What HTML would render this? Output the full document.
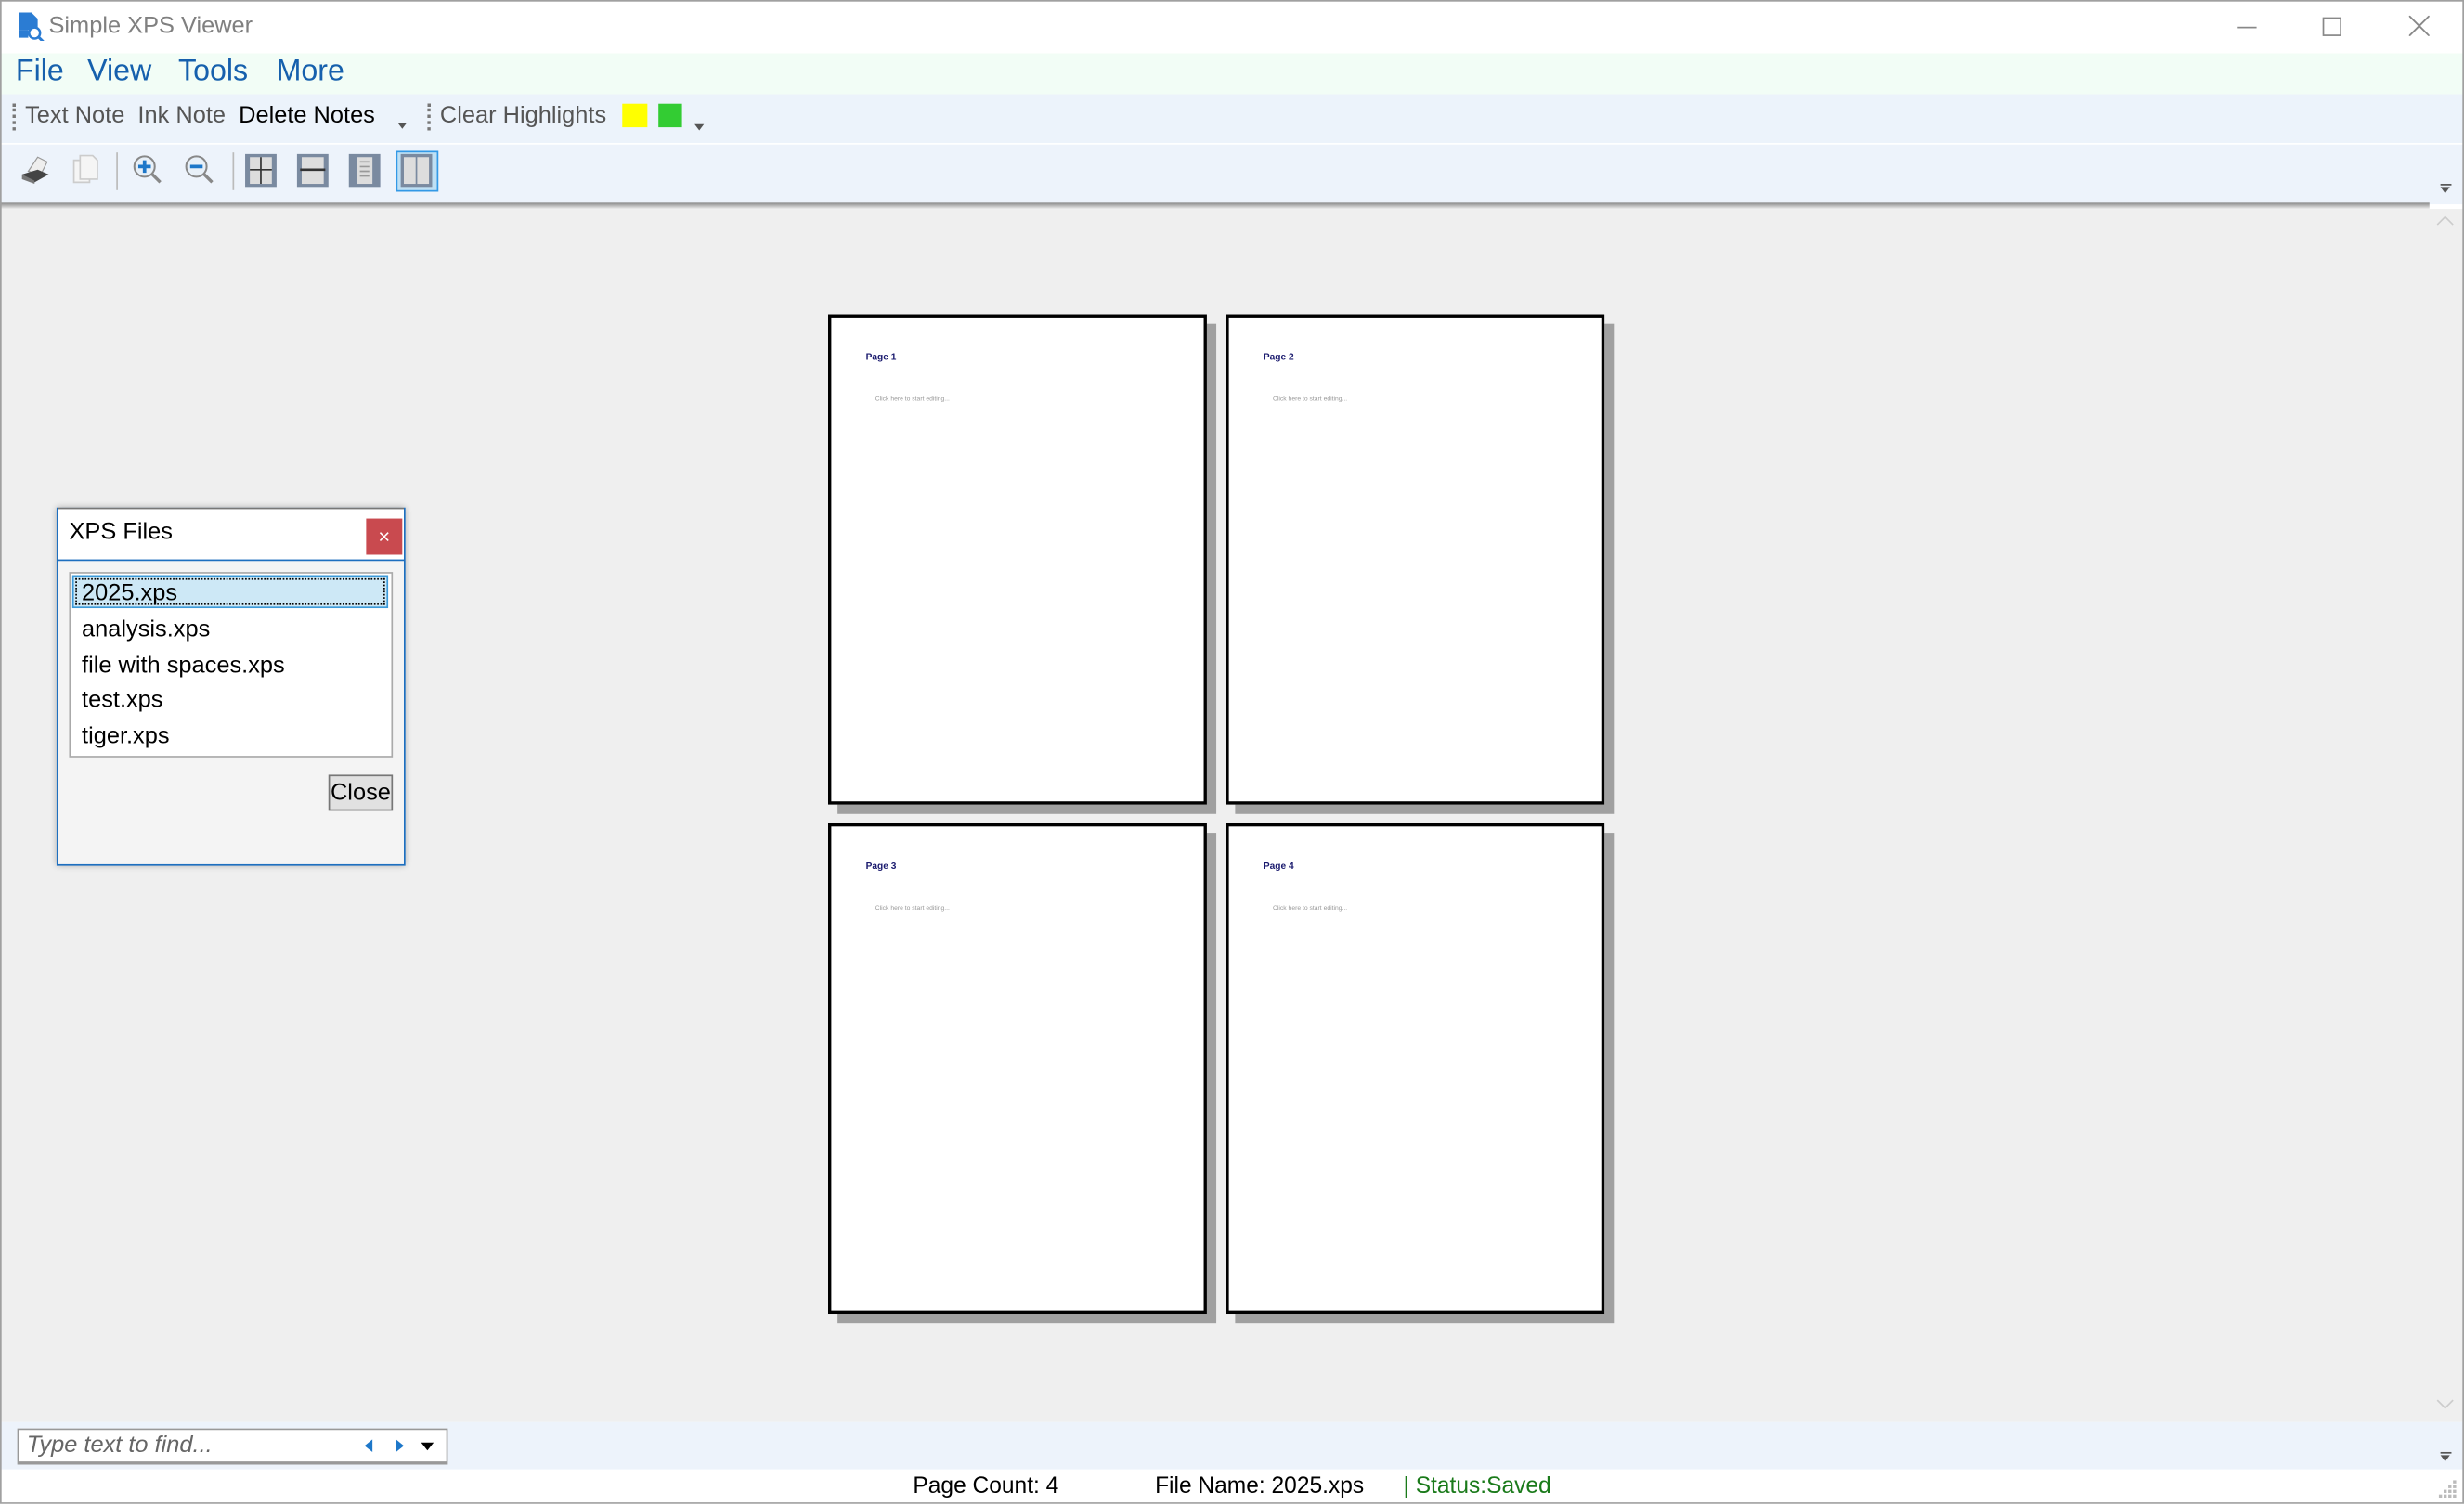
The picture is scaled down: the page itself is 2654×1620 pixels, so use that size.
<!DOCTYPE html>
<html><head><meta charset="utf-8"><style>
html,body{margin:0;padding:0;width:2654px;height:1620px;overflow:hidden;background:#fff}
#s{position:absolute;left:0;top:0;width:1568px;height:957px;transform:scale(1.692602);transform-origin:0 0;font-family:"Liberation Sans",sans-serif;background:#fff;overflow:hidden}
.a{position:absolute}
.pg{position:absolute;width:237px;height:308px;background:#fff;border:2px solid #000;box-shadow:6px 6px 0 #a0a0a0}
.pg b{position:absolute;left:22px;top:23px;font-size:6px;color:#1a1a6e}
.pg i{position:absolute;left:28px;top:49px;font-size:4px;color:#999;font-style:normal}
.ico{position:absolute;top:97px;width:22px;height:22px}
</style></head><body><div id="s">
<!-- title -->
<div class="a" style="left:0;top:0;width:1568px;height:34px;background:#fff"></div>
<svg class="a" style="left:11px;top:8px" width="18" height="18" viewBox="0 0 18 18"><path d="M1 0h8l4 4v7H1z" fill="#2b7cd3"/><circle cx="11" cy="13" r="3.5" fill="#fff" stroke="#2b7cd3" stroke-width="1.5"/><path d="M13.5 15.5l3 3" stroke="#2b7cd3" stroke-width="1.8"/><path d="M1 11h6v5H1z" fill="#2b7cd3"/></svg>
<div class="a" style="left:31px;top:8px;font-size:15px;color:#808080">Simple XPS Viewer</div>
<div class="a" style="left:1424px;top:17px;width:12px;height:1px;background:#888"></div>
<div class="a" style="left:1478px;top:11px;width:10px;height:10px;border:1px solid #888"></div>
<svg class="a" style="left:1533px;top:10px" width="13" height="13"><path d="M0 0L13 13M13 0L0 13" stroke="#888" stroke-width="1.1"/></svg>
<!-- menu -->
<div class="a" style="left:0;top:34px;width:1568px;height:26px;background:#f2fdf6"></div>
<div class="a" style="left:10px;top:35px;font-size:19px;color:#1660ad"><span>File</span><span style="margin-left:15px">View</span><span style="margin-left:17px">Tools</span><span style="margin-left:18px">More</span></div>
<!-- toolbar1 -->
<div class="a" style="left:0;top:60px;width:1568px;height:31px;background:#ecf3fb"></div>
<div class="a" style="left:8px;top:66px;width:2px;height:17px;border-left:2px dotted #777"></div>
<div class="a" style="left:16px;top:65px;font-size:15px;color:#555">Text Note&nbsp; Ink Note <span style="color:#000">&nbsp;Delete Notes</span></div>
<div class="a" style="left:253px;top:78px;width:0;height:0;border:3px solid transparent;border-top:4px solid #555"></div>
<div class="a" style="left:272px;top:66px;width:2px;height:17px;border-left:2px dotted #777"></div>
<div class="a" style="left:280px;top:65px;font-size:15px;color:#555">Clear Highlights</div>
<div class="a" style="left:396px;top:66px;width:16px;height:15px;background:#ffff00"></div>
<div class="a" style="left:419px;top:66px;width:15px;height:15px;background:#33cc33"></div>
<div class="a" style="left:442px;top:79px;width:0;height:0;border:3px solid transparent;border-top:4px solid #555"></div>
<!-- toolbar2 -->
<div class="a" style="left:0;top:92px;width:1568px;height:38px;background:#edf3fb"></div>
<div class="a" style="left:0;top:129px;width:1546px;height:4px;background:linear-gradient(#888,#efefef)"></div>
<svg class="ico" style="left:12px" viewBox="0 0 22 22"><path d="M6 12L12 3l6 3-4 8z" fill="#eee" stroke="#999" stroke-width=".7"/><path d="M2 14l10-3 7 3-9 5z" fill="#444"/><path d="M2 14v3l8 3v-2z" fill="#777"/></svg>
<svg class="ico" style="left:44px" viewBox="0 0 22 22"><path d="M3 5h10v14H3z" fill="#f5f5f5" stroke="#ccc"/><path d="M7 2h8l3 3v12H7z" fill="#f5f5f5" stroke="#ccc"/></svg>
<div class="a" style="left:74px;top:97px;width:1px;height:24px;background:#bbb"></div>
<svg class="ico" style="left:83px" viewBox="0 0 22 22"><circle cx="9" cy="9" r="6.5" fill="#e8f0f8" stroke="#888" stroke-width="1.2"/><path d="M13.5 13.5L19 19" stroke="#888" stroke-width="2"/><path d="M9 5v8M5 9h8" stroke="#1d77c9" stroke-width="2.2"/></svg>
<svg class="ico" style="left:116px" viewBox="0 0 22 22"><circle cx="9" cy="9" r="6.5" fill="#e8f0f8" stroke="#888" stroke-width="1.2"/><path d="M13.5 13.5L19 19" stroke="#888" stroke-width="2"/><path d="M5 9h8" stroke="#1d77c9" stroke-width="2.2"/></svg>
<div class="a" style="left:148px;top:97px;width:1px;height:24px;background:#bbb"></div>
<svg class="ico" style="left:155px" viewBox="0 0 22 22"><rect x="1" y="1" width="20" height="21" fill="#7a8aa0"/><rect x="4" y="3" width="14" height="17" fill="#ddd"/><path d="M11 3v17M4 11h14" stroke="#333"/></svg>
<svg class="ico" style="left:188px" viewBox="0 0 22 22"><rect x="1" y="1" width="20" height="21" fill="#7a8aa0"/><rect x="4" y="3" width="14" height="17" fill="#ddd"/><path d="M3 11h16" stroke="#333" stroke-width="1.5"/></svg>
<svg class="ico" style="left:221px" viewBox="0 0 22 22"><rect x="1" y="1" width="20" height="21" fill="#7a8aa0"/><rect x="6" y="3" width="10" height="17" fill="#ddd"/><path d="M8 6h6M8 9h6M8 12h6M8 15h6" stroke="#999"/></svg>
<div class="a" style="left:252px;top:96px;width:27px;height:26px;background:#bfe0f4;border:1px solid #3399e6;box-sizing:border-box"></div>
<svg class="ico" style="left:254px" viewBox="0 0 22 22"><rect x="1" y="1" width="20" height="21" fill="#7a8aa0"/><rect x="3" y="3" width="7.5" height="17" fill="#ddd"/><rect x="11.5" y="3" width="7.5" height="17" fill="#ddd"/></svg>
<div class="a" style="left:1553px;top:117px;width:7px;height:1px;background:#555"></div>
<div class="a" style="left:1553px;top:119px;border:3.5px solid transparent;border-top:4px solid #555;width:0;height:0"></div>
<!-- content -->
<div class="a" style="left:0;top:133px;width:1568px;height:772px;background:#efefef"></div>
<svg class="a" style="left:1550px;top:136px" width="12" height="8"><path d="M1 7l5-5 5 5" stroke="#ccc" fill="none"/></svg>
<svg class="a" style="left:1550px;top:890px" width="12" height="8"><path d="M1 1l5 5 5-5" stroke="#ccc" fill="none"/></svg>
<div class="pg" style="left:527px;top:200px"><b>Page 1</b><i>Click here to start editing...</i></div>
<div class="pg" style="left:780px;top:200px"><b>Page 2</b><i>Click here to start editing...</i></div>
<div class="pg" style="left:527px;top:524px"><b>Page 3</b><i>Click here to start editing...</i></div>
<div class="pg" style="left:780px;top:524px"><b>Page 4</b><i>Click here to start editing...</i></div>
<!-- dialog -->
<div class="a" style="left:36px;top:323px;width:222px;height:228px;background:#f4f4f4;border:1px solid #1e6fbf;box-sizing:border-box;box-shadow:0 0 4px rgba(0,0,0,.3)"></div>
<div class="a" style="left:37px;top:323px;width:220px;height:32px;background:#fff;border-top:1px solid #777;border-bottom:1px solid #1e6fbf"></div>
<div class="a" style="left:44px;top:330px;font-size:15px;color:#000">XPS Files</div>
<div class="a" style="left:233px;top:330px;width:23px;height:23px;background:#c94a4f;color:#fff;font-size:13px;text-align:center;line-height:23px">×</div>
<div class="a" style="left:44px;top:364px;width:206px;height:118px;background:#fff;border:1px solid #aaa;box-sizing:border-box"></div>
<div class="a" style="left:46px;top:366px;width:201px;height:21px;background:#cde8f6;border:1px solid #3c9ad9;box-sizing:border-box"><div style="margin:1px;height:15px;border:1px dotted #000"></div></div>
<div class="a" style="left:52px;top:367px;font-size:15px;line-height:22.8px;color:#000">2025.xps<br>analysis.xps<br>file with spaces.xps<br>test.xps<br>tiger.xps</div>
<div class="a" style="left:209px;top:493px;width:41px;height:23px;background:#e1e1e1;border:1px solid #777;box-sizing:border-box;font-size:15px;text-align:center;line-height:21px">Close</div>
<!-- find bar -->
<div class="a" style="left:0;top:905px;width:1568px;height:30px;background:#edf3fb"></div>
<div class="a" style="left:11px;top:909px;width:274px;height:23px;background:#fff;border:1px solid #999;border-width:1px 1px 2px;box-sizing:border-box"></div>
<div class="a" style="left:17px;top:911px;font-size:15px;color:#666;font-style:italic">Type text to find...</div>
<div class="a" style="left:232px;top:916px;border:4px solid transparent;border-right:5px solid #1d77c9;border-left:0;width:0;height:0"></div>
<div class="a" style="left:252px;top:916px;border:4px solid transparent;border-left:5px solid #1d77c9;border-right:0;width:0;height:0"></div>
<div class="a" style="left:268px;top:918px;border:4px solid transparent;border-top:5px solid #000;border-bottom:0;width:0;height:0"></div>
<div class="a" style="left:1553px;top:924px;width:7px;height:1px;background:#555"></div>
<div class="a" style="left:1553px;top:926px;border:3.5px solid transparent;border-top:4px solid #555;width:0;height:0"></div>
<!-- status -->
<div class="a" style="left:581px;top:938px;font-size:14.5px;color:#000">Page Count: 4</div>
<div class="a" style="left:735px;top:938px;font-size:14.5px;color:#000">File Name: 2025.xps</div>
<div class="a" style="left:893px;top:938px;font-size:14.5px;color:#1a7a1a">| Status:Saved</div>
<svg class="a" style="left:1551px;top:941px" width="13" height="13"><g fill="#bbb"><rect x="10" y="1" width="2" height="2"/><rect x="7" y="4" width="2" height="2"/><rect x="10" y="4" width="2" height="2"/><rect x="4" y="7" width="2" height="2"/><rect x="7" y="7" width="2" height="2"/><rect x="10" y="7" width="2" height="2"/><rect x="1" y="10" width="2" height="2"/><rect x="4" y="10" width="2" height="2"/><rect x="7" y="10" width="2" height="2"/><rect x="10" y="10" width="2" height="2"/></g></svg>
<div class="a" style="left:0;top:0;width:1568px;height:957px;border:1px solid #a0a0a0;box-sizing:border-box"></div>
</div></body></html>
